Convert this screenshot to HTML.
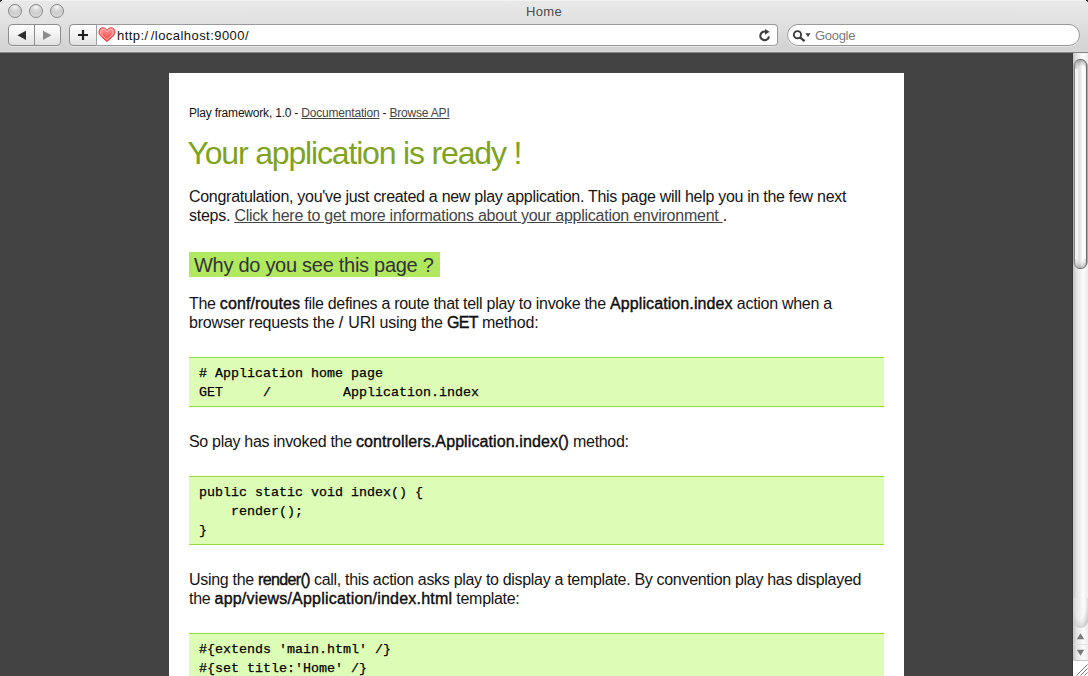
<!DOCTYPE html>
<html><head><meta charset="utf-8"><title>Home</title>
<style>
*{margin:0;padding:0;box-sizing:border-box}
html,body{width:1088px;height:676px;overflow:hidden;background:#434343;font-family:"Liberation Sans",sans-serif}
.abs{position:absolute}
#chrome{position:absolute;left:0;top:0;width:1088px;height:53px;background:linear-gradient(#e9e9e9 0px,#e2e2e2 20px,#d3d3d3 47px,#d4d4d4 50px,#d8d8d8 52px);}
#chrome .hl{position:absolute;left:0;top:0;width:1088px;height:1px;background:#f2f2f2}
#chrome .bl{position:absolute;left:0;top:52px;width:1088px;height:1px;background:#858585}
.tl{position:absolute;top:4px;width:14px;height:14px;border-radius:50%;border:1px solid #888;background:radial-gradient(circle at 50% 16%,#fbfbfb 0,#d8d8d8 30%,#cdcdcd 55%,#e4e4e4 100%)}
#title{position:absolute;left:0;top:4px;width:1088px;text-align:center;font-size:13px;color:#4d4d4d;line-height:16px;letter-spacing:0.3px}
.btn{position:absolute;top:24px;height:22px;border:1px solid #8e8e8e;border-radius:4px;background:linear-gradient(#fefefe,#f2f2f2 50%,#e0e0e0);box-shadow:0 1px 0 rgba(255,255,255,.45)}
#url{position:absolute;left:96px;top:24px;width:682px;height:22px;border:1px solid #9a9a9a;border-left:1px solid #9e9e9e;border-radius:0 4px 4px 0;background:#fff;box-shadow:0 1px 0 rgba(255,255,255,.45)}
#urltext{position:absolute;left:117px;top:28px;font-size:13px;line-height:15px;color:#111;letter-spacing:0.45px}
#search{position:absolute;left:787px;top:24px;width:293px;height:22px;border:1px solid #9a9a9a;border-radius:11px;background:#fff;box-shadow:0 1px 0 rgba(255,255,255,.45)}
#gtext{position:absolute;left:815px;top:28px;font-size:13px;line-height:15px;color:#7b7b7b;letter-spacing:-0.3px}
#scroll{position:absolute;left:1072px;top:53px;width:16px;height:623px;background:linear-gradient(90deg,#3a3a3a 0,#3a3a3a 1px,#c5c5c5 1px,#c8c8c8 2px,#d6d6d6 3px,#dedede 4px,#e4e4e4 5px,#e9e9e9 6px,#ececec 7px,#efefef 8px,#f3f3f3 9px,#f8f8f8 10px,#fafafa 11px,#fafafa 12px,#f6f6f6 13px,#f2f2f2 14px,#eeeeee 15px)}
#thumb{position:absolute;left:1073px;top:59px;width:15px;height:210px;border-radius:7.5px;background:#ababab}
#thumbin{position:absolute;left:1074px;top:59px;width:13px;height:210px;border-radius:6.5px;border:1px solid #6c6c6c;border-left-color:#858585;background:linear-gradient(90deg,#f0f0f0 0,#f6f6f6 1px,#f4f4f4 2px,#eeeeee 3px,#dedede 4px,#e4e4e4 5px,#ececec 6px,#f6f6f6 7px,#ffffff 8px,#ffffff 9px,#f8f8f8 10px,#f8f8f8 11px)}
#thumbcap1{position:absolute;left:1075px;top:60px;width:11px;height:9px;border-radius:5.5px 5.5px 0 0;background:radial-gradient(ellipse 80% 100% at 60% 100%,rgba(160,160,160,0) 30%,rgba(120,120,120,.55) 100%)}
#thumbcap2{position:absolute;left:1075px;top:259px;width:11px;height:9px;border-radius:0 0 5.5px 5.5px;background:radial-gradient(ellipse 80% 100% at 50% 0%,rgba(160,160,160,0) 30%,rgba(120,120,120,.45) 100%)}
#trackend{position:absolute;left:1073px;top:598px;width:15px;height:30px;border-radius:0 0 7.5px 7.5px;background:radial-gradient(ellipse 75% 100% at 45% 20%,rgba(255,255,255,0) 0,rgba(245,245,245,0.3) 50%,rgba(200,200,200,0.9) 88%,rgba(165,165,165,1) 100%)}
#arrows{position:absolute;left:1073px;top:628px;width:15px;height:33px;border-bottom:1px solid #c8c8c8}
#resize{position:absolute;left:1073px;top:661px;width:15px;height:15px;background:#fff}
#page{position:absolute;left:169px;top:73px;width:735px;height:620px;background:#fff}
.t{position:absolute;left:189px;white-space:nowrap;font-size:16px;line-height:19px;color:#141414;letter-spacing:-0.29px}
b{font-weight:normal;letter-spacing:0.1px;-webkit-text-stroke:0.38px #000}
a{color:#444;text-decoration:underline}
pre{position:absolute;left:189px;width:695px;background:#ddfdb6;border-top:1px solid #96dc3e;border-bottom:1px solid #96dc3e;font-family:"Liberation Mono",monospace;font-weight:normal;-webkit-text-stroke:0.25px #000;font-size:13.33px;line-height:19px;color:#000;padding-left:10px}
</style></head><body>
<div id="chrome">
  <div class="hl"></div>
  <div class="tl" style="left:8px"></div>
  <div class="tl" style="left:29px"></div>
  <div class="tl" style="left:50px"></div>
  <div id="title">Home</div>
  <div class="btn" style="left:8px;width:53px"></div>
  <div class="abs" style="left:34px;top:25px;width:1px;height:20px;background:#8e8e8e"></div>
  <div class="btn" style="left:69px;width:28px;border-radius:4px 0 0 4px"></div>
  <div id="url"></div>
  <div id="urltext">http:<span style="letter-spacing:2.6px">/</span>/localhost:9000/</div>
  <div id="search"></div>
  <svg class="abs" style="left:0;top:0" width="1088" height="53" viewBox="0 0 1088 53">
    <path d="M17.5 35.3 L26 30.8 L26 39.9 Z" fill="#2e2e2e"/>
    <path d="M43 30.8 L51.5 35.3 L43 39.9 Z" fill="#8c8c8c"/>
    <path d="M78 35 H88 M83 30 V40" stroke="#1e1e1e" stroke-width="2.2"/>
    <defs><linearGradient id="hg" x1="0" y1="0" x2="0" y2="1"><stop offset="0" stop-color="#ff9a9a"/><stop offset="1" stop-color="#ff3c3c"/></linearGradient></defs>
    <path d="M107 41.6 C103 38 99 35.5 99 31.8 C99 29.4 100.8 27.8 103 27.8 C105 27.8 106.3 29 107 30.2 C107.7 29 109 27.8 111 27.8 C113.2 27.8 115 29.4 115 31.8 C115 35.5 111 38 107 41.6 Z" fill="url(#hg)" stroke="#e23c3c" stroke-width="1"/>
    <path d="M107 39.6 C104 37 100.8 35 100.8 31.9 C100.8 30.2 102 29.3 103.2 29.3 C105 29.3 106 30.6 107 31.9 C108 30.6 109 29.3 110.8 29.3 C112 29.3 113.2 30.2 113.2 31.9 C113.2 35 110 37 107 39.6 Z" fill="none" stroke="#ffd0d0" stroke-width="0.8"/>
    <path d="M768.9 36.3 A4.3 4.3 0 1 1 765.2 31.6" fill="none" stroke="#3f3f3f" stroke-width="2.1"/>
    <path d="M765 29 L769.6 31.8 L765 34.7 Z" fill="#3f3f3f"/>
    <circle cx="797.5" cy="34.7" r="3.6" fill="none" stroke="#3c3c3c" stroke-width="1.9"/>
    <path d="M800 37.3 L804.6 41.2" stroke="#3c3c3c" stroke-width="2.2"/>
    <path d="M805.4 33.3 L810.6 33.3 L808 36.9 Z" fill="#3c3c3c"/>
  </svg>
  <div id="gtext">Google</div>
  <div class="bl"></div>
  <div class="abs" style="left:0;top:0;width:2px;height:1px;background:#222"></div><div class="abs" style="left:0;top:1px;width:1px;height:1px;background:#555"></div>
  <div class="abs" style="left:1086px;top:0;width:2px;height:1px;background:#222"></div><div class="abs" style="left:1087px;top:1px;width:1px;height:1px;background:#555"></div>
</div>
<div id="scroll"></div>
<div id="thumb"></div><div id="thumbin"></div><div id="thumbcap1"></div><div id="thumbcap2"></div>
<div id="trackend"></div>
<div id="arrows"></div>
<div id="resize"></div>
<svg class="abs" style="left:1072px;top:620px" width="16" height="56" viewBox="1072 620 16 56">
  <path d="M1076.8 639.2 L1080.5 633.2 L1084.2 639.2 Z" fill="#7a7a7a"/>
  <path d="M1073 644.5 H1088" stroke="#dedede" stroke-width="1"/>
  <path d="M1076.8 649.8 L1084.2 649.8 L1080.5 655.8 Z" fill="#7a7a7a"/>
  <path d="M1076.5 675.5 L1087.5 664.5 M1080.5 675.5 L1087.5 668.5 M1084.5 675.5 L1087.5 672.5" stroke="#7a7a7a" stroke-width="1"/>
</svg>
<div id="page"></div>

<div class="t" style="top:106px;font-size:12px;line-height:15px;letter-spacing:-0.2px">Play framework, 1.0 - <a>Documentation</a> - <a>Browse API</a></div>
<div class="t" style="left:187.5px;top:138px;font-size:32px;line-height:30px;color:#7fa31f;letter-spacing:-1.17px">Your application is ready !</div>
<div class="t" style="top:187px">Congratulation, you've just created a new play application. This page will help you in the few next</div>
<div class="t" style="top:206px;letter-spacing:-0.25px">steps. <a>Click here to get more informations about your application environment </a>.</div>
<div class="abs" style="left:189px;top:252px;width:251px;height:25px;background:#b0e860"></div>
<div class="t" style="left:194px;top:254px;font-size:20px;line-height:22px;color:#333;letter-spacing:-0.28px">Why do you see this page ?</div>
<div class="t" style="top:294px">The <b>conf/routes</b> file defines a route that tell play to invoke the <b>Application.index</b> action when a</div>
<div class="t" style="top:313px;letter-spacing:-0.2px">browser requests the <b style="letter-spacing:1px;font-weight:normal;-webkit-text-stroke:0.15px #000">/</b> URI using the <b style="letter-spacing:-0.7px">GET</b> method:</div>
<pre style="top:357px;height:50px;padding-top:6px">
# Application home page
GET     /         Application.index</pre>
<div class="t" style="top:432px;letter-spacing:-0.31px">So play has invoked the <b>controllers.Application.index()</b> method:</div>
<pre style="top:476px;height:69px;padding-top:6px">
public static void index() {
    render();
}</pre>
<div class="t" style="top:570px;letter-spacing:-0.31px">Using the <b style="letter-spacing:-0.62px">render()</b> call, this action asks play to display a template. By convention play has displayed</div>
<div class="t" style="top:589px">the <b style="letter-spacing:0.2px">app/views/Application/index.html</b> template:</div>
<pre style="top:633px;height:60px;padding-top:6px">
#{extends 'main.html' /}
#{set title:'Home' /}</pre>
</body></html>
